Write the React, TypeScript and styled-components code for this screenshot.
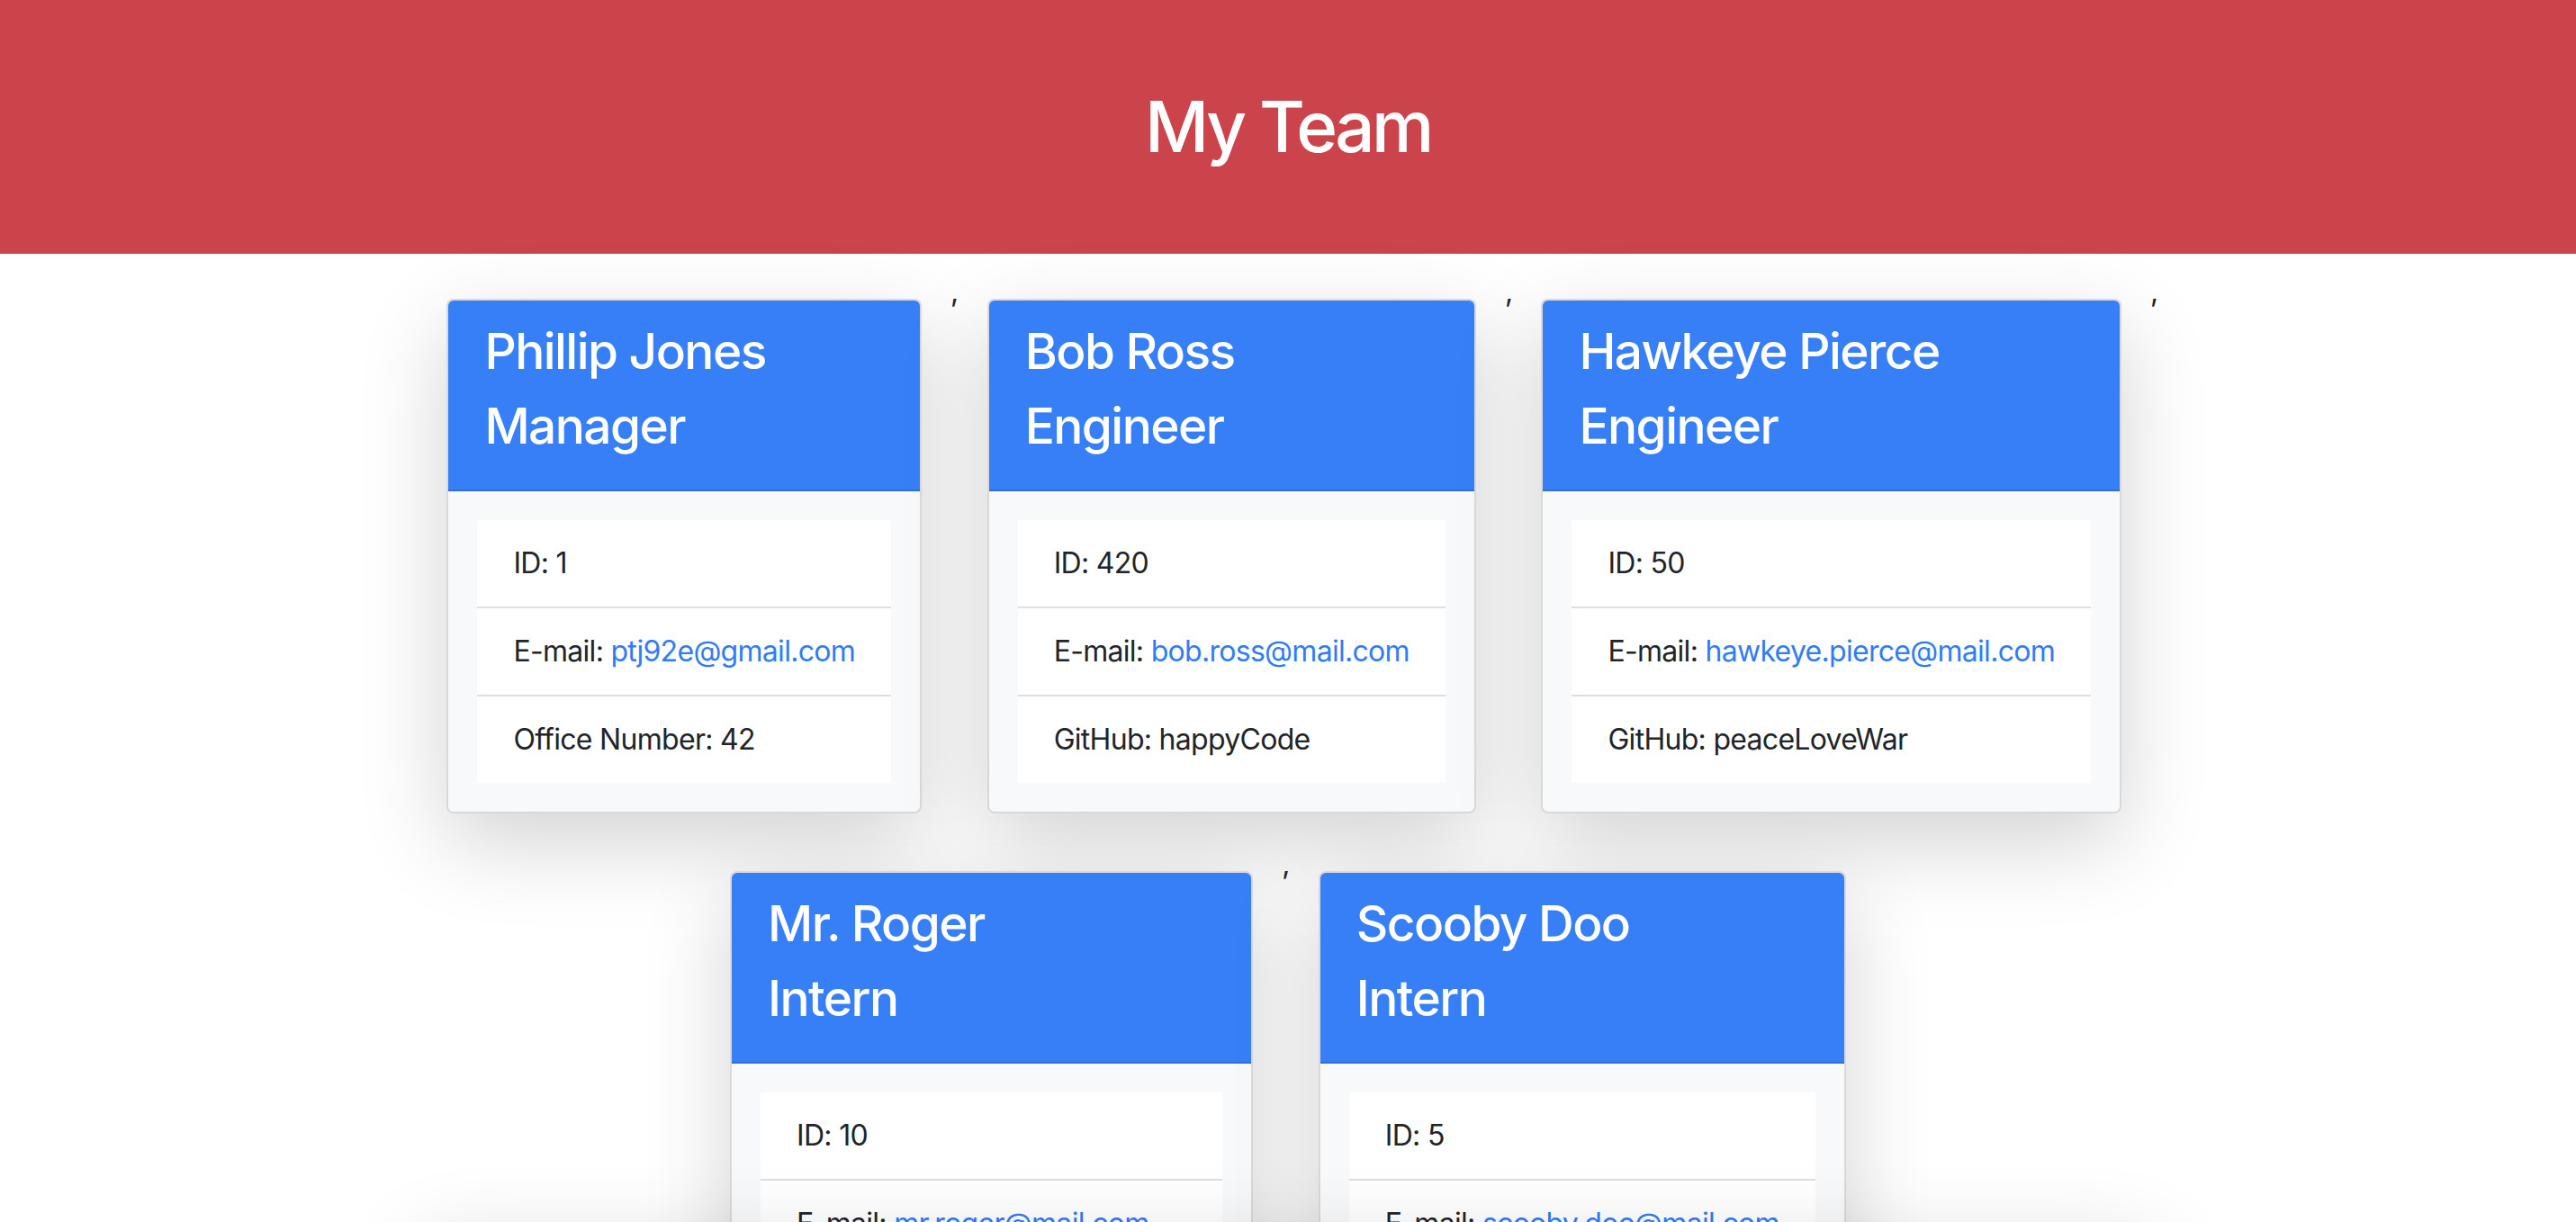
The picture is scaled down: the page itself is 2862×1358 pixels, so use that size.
import React from "react"
import styled, { createGlobalStyle } from "styled-components"

const GlobalStyle = createGlobalStyle`
	*, *::before, *::after {
		box-sizing: border-box;
	}
	body {
		margin: 0;
		background: #fff;
		color: #212529;
		font-family: Inter, "Liberation Sans", Arial, sans-serif;
		font-size: 32px;
		line-height: 1.5;
		letter-spacing: -0.022em;
	}
`

type Member = {
	name: string
	role: "Manager" | "Engineer" | "Intern"
	id: number
	email: string
	extra: { label: string; value: string }
}

const team: Member[] = [
	{ name: "Phillip Jones", role: "Manager", id: 1, email: "ptj92e@gmail.com", extra: { label: "Office Number", value: "42" } },
	{ name: "Bob Ross", role: "Engineer", id: 420, email: "bob.ross@mail.com", extra: { label: "GitHub", value: "happyCode" } },
	{ name: "Hawkeye Pierce", role: "Engineer", id: 50, email: "hawkeye.pierce@mail.com", extra: { label: "GitHub", value: "peaceLoveWar" } },
	{ name: "Mr. Roger", role: "Intern", id: 10, email: "mr.roger@mail.com", extra: { label: "School", value: "Neighborhood School" } },
	{ name: "Scooby Doo", role: "Intern", id: 5, email: "scooby.doo@mail.com", extra: { label: "School", value: "Mystery Inc." } },
]

const Banner = styled.header`
	height: 282px;
	display: flex;
	align-items: center;
	justify-content: center;
	background: #cb444b;
`

const Title = styled.h1`
	margin: 0;
	color: #fff;
	font-size: 78px;
	font-weight: 500;
	line-height: 1.2;
	letter-spacing: -0.045em;
`

const Container = styled.main`
	max-width: 2280px;
	margin: 0 auto;
	padding: 0 30px;
`

const Team = styled.div`
	display: flex;
	flex-wrap: wrap;
	justify-content: center;
	align-items: flex-start;
	padding-top: 18px;
`

const Separator = styled.span`
	line-height: 48px;
`

const Card = styled.article`
	margin: 32px;
	background: #f8f9fa;
	border: 2px solid rgba(0, 0, 0, 0.125);
	border-radius: 8px;
	box-shadow: 0 32px 96px rgba(0, 0, 0, 0.175);
	overflow: hidden;
`

const CardHeader = styled.div`
	padding: 23px 40px 21px;
	background: #367ff7;
	border-bottom: 2px solid rgba(0, 0, 0, 0.125);
	color: #fff;
`

const HeaderLine = styled.h3`
	margin: 0 0 16px;
	font-size: 55px;
	font-weight: 500;
	line-height: 67px;
	letter-spacing: -0.028em;
	white-space: nowrap;
`

const CardBody = styled.div`
	padding: 32px;
`

const List = styled.ul`
	margin: 0;
	padding: 0;
	list-style: none;
	background: #fff;
`

const Item = styled.li`
	padding: 24px 40px;
	white-space: nowrap;

	& + & {
		border-top: 2px solid #dfdfdf;
	}
`

const Mail = styled.a`
	color: #2f7cf6;
	text-decoration: none;
`

const BottomShade = styled.div`
	position: fixed;
	left: 470px;
	right: 470px;
	top: calc(100% + 28px);
	height: 200px;
	box-shadow: 0 0 96px rgba(0, 0, 0, 0.16);
	pointer-events: none;
	z-index: 5;
`

function MemberCard({ member }: { member: Member }) {
	return (
		<Card>
			<CardHeader>
				<HeaderLine>{member.name}</HeaderLine>
				<HeaderLine>{member.role}</HeaderLine>
			</CardHeader>
			<CardBody>
				<List>
					<Item>ID: {member.id}</Item>
					<Item>
						E-mail: <Mail href={`mailto:${member.email}`}>{member.email}</Mail>
					</Item>
					<Item>
						{member.extra.label}: {member.extra.value}
					</Item>
				</List>
			</CardBody>
		</Card>
	)
}

export default function App() {
	return (
		<>
			<GlobalStyle />
			<Banner>
				<Title>My Team</Title>
			</Banner>
			<Container>
				<Team>
					{team.map((member, i) => (
						<React.Fragment key={member.id}>
							{i > 0 && <Separator>,</Separator>}
							<MemberCard member={member} />
						</React.Fragment>
					))}
				</Team>
			</Container>
			<BottomShade />
		</>
	)
}
